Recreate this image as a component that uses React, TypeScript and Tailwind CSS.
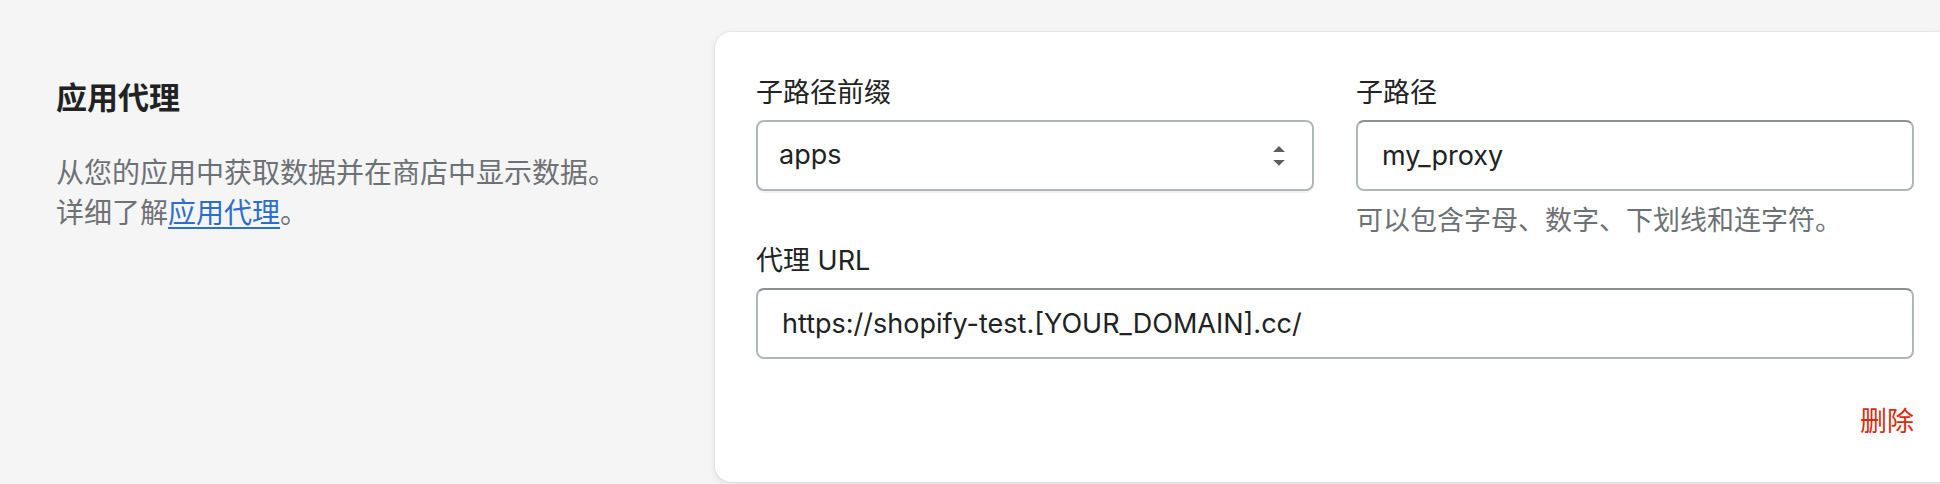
import { useState } from 'react'

const font = "font-['Inter','Noto_Sans_CJK_SC',sans-serif]"

function SelectArrows() {
  return (
    <svg className="w-[40px] h-[40px] text-[#5c5f62]" viewBox="0 0 20 20" fill="currentColor">
      <path d="M13 8l-3-3-3 3h6zm-.1 4L10 14.9 7.1 12h5.8z" />
    </svg>
  )
}

export default function App() {
  const [prefix, setPrefix] = useState('apps')
  const [subpath, setSubpath] = useState('my_proxy')
  const [url, setUrl] = useState('https://shopify-test.[YOUR_DOMAIN].cc/')

  return (
    <div className={`w-[1940px] h-[484px] overflow-hidden bg-[#f5f5f5] flex pl-[56px] ${font}`}>
      {/* Section description */}
      <div className="w-[659px] shrink-0 pt-[78px]">
        <h2 className="text-[31px] leading-[40px] font-semibold text-[#202223]">应用代理</h2>
        <p className="mt-[35px] w-[574px] text-[28px] leading-[40px] text-[#6d7175]">
          从您的应用中获取数据并在商店中显示数据。详细了解<a href="#" className="text-[#2c6ecb] underline underline-offset-[4px]">应用代理</a>。
        </p>
      </div>

      {/* Card */}
      <div className="w-[1240px] h-[450px] shrink-0 mt-[32px] bg-white rounded-[16px] p-[41px] shadow-[0_0_0_1px_rgba(63,63,68,0.05),0_2px_6px_rgba(63,63,68,0.12)]">
        <div className="grid grid-cols-2 gap-x-[42px]">
          <div>
            <label className="block text-[27px] leading-[40px] text-[#202223]">子路径前缀</label>
            <div className="mt-[7px] relative h-[71px] rounded-[8px] border-2 border-[#b1b6bb] bg-white shadow-[0_2px_0_rgba(22,29,37,0.05)] flex items-center">
              <select
                value={prefix}
                onChange={(e) => setPrefix(e.target.value)}
                className="appearance-none w-full h-full bg-transparent pl-[21px] pr-[60px] text-[27px] text-[#202223] outline-none"
              >
                <option value="apps">apps</option>
                <option value="a">a</option>
                <option value="community">community</option>
                <option value="tools">tools</option>
              </select>
              <div className="absolute right-[13px] top-[14px] pointer-events-none">
                <SelectArrows />
              </div>
            </div>
          </div>

          <div>
            <label className="block text-[27px] leading-[40px] text-[#202223]">子路径</label>
            <input
              value={subpath}
              onChange={(e) => setSubpath(e.target.value)}
              className="mt-[7px] block w-full h-[71px] rounded-[8px] border-2 border-[#b1b6bb] border-t-[#8c9196] px-[24px] text-[27px] text-[#202223] outline-none"
            />
            <p className="mt-[10px] text-[27px] leading-[40px] text-[#6d7175]">可以包含字母、数字、下划线和连字符。</p>
          </div>
        </div>

        <label className="block text-[27px] leading-[40px] text-[#202223]">代理 URL</label>
        <input
          value={url}
          onChange={(e) => setUrl(e.target.value)}
          className="mt-[7px] block w-full h-[71px] rounded-[8px] border-2 border-[#b1b6bb] border-t-[#8c9196] px-[24px] text-[27px] text-[#202223] outline-none"
        />

        <div className="mt-[43px] flex justify-end">
          <button className="text-[27px] leading-[40px] text-[#d82c0d]">删除</button>
        </div>
      </div>
    </div>
  )
}
